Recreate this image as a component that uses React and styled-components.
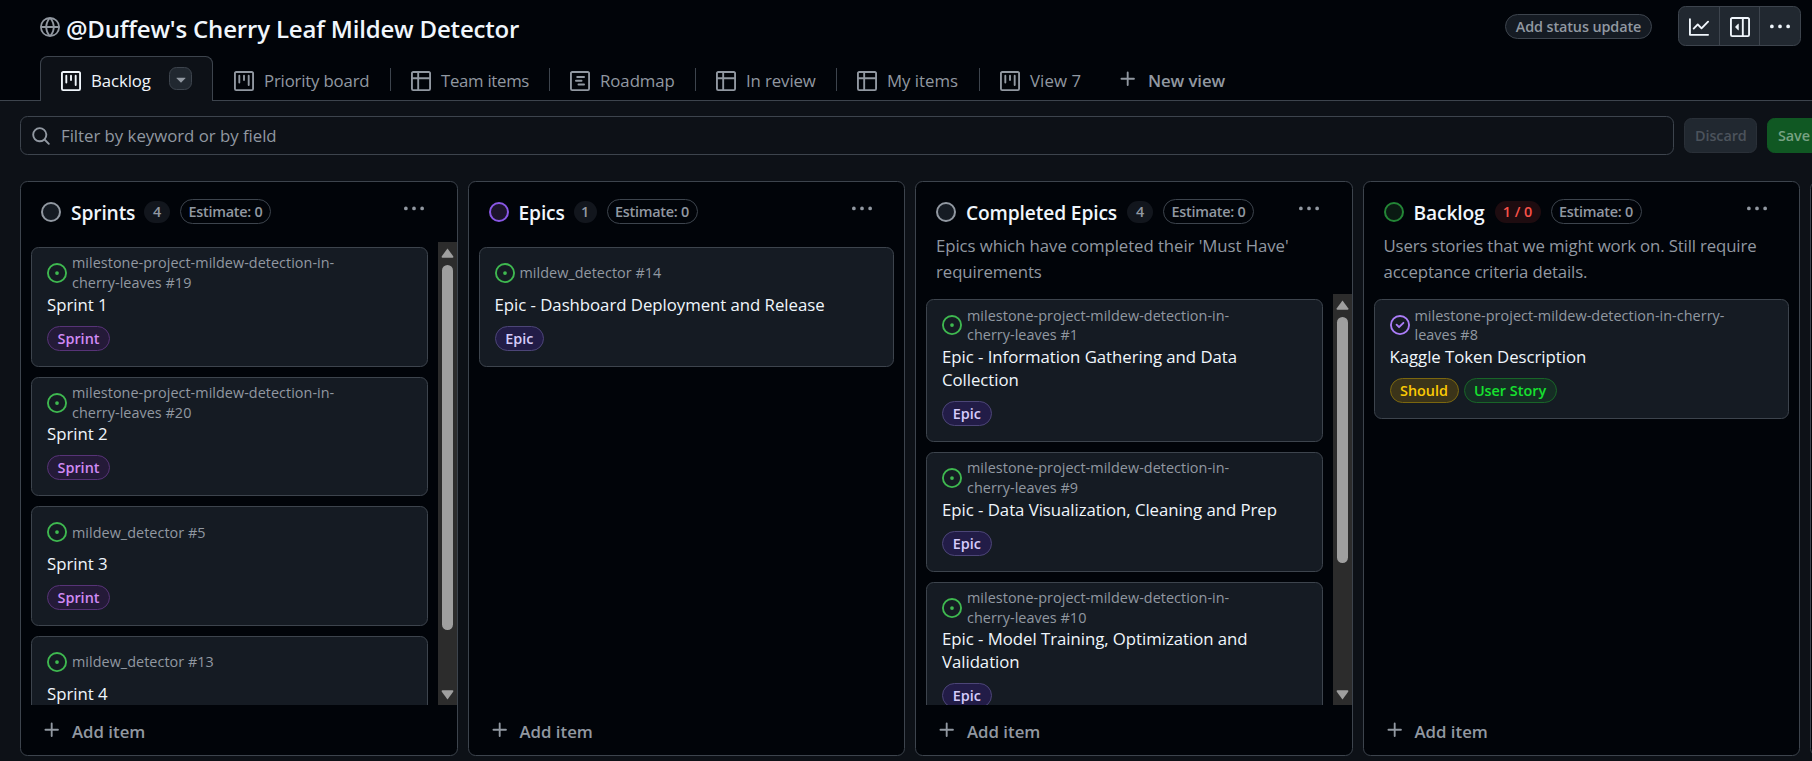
import React from "react";
import styled, { createGlobalStyle } from "styled-components";

const c = {
  canvas: "#0d1117",
  inset: "#010409",
  card: "#151b23",
  border: "#3d444d",
  text: "#f0f6fc",
  muted: "#9198a1",
  control: "#212830",
};

const GlobalStyle = createGlobalStyle`
  * { box-sizing: border-box; }
  html, body { margin: 0; padding: 0; }
  body {
    width: 1812px;
    height: 761px;
    overflow: hidden;
    background: ${c.canvas};
    color: ${c.text};
    font-family: "Open Sans", "Noto Sans", sans-serif;
    font-size: 16.8px;
  }
  button { font: inherit; letter-spacing: inherit; color: inherit; margin: 0; padding: 0; border: 0; background: none; }
  h1, h2, p { margin: 0; }
`;

const FRAME =
  "M1.75 0h12.5C15.216 0 16 .784 16 1.75v12.5A1.75 1.75 0 0 1 14.25 16H1.75A1.75 1.75 0 0 1 0 14.25V1.75C0 .784.784 0 1.75 0ZM1.5 1.75v12.5c0 .138.112.25.25.25h12.5a.25.25 0 0 0 .25-.25V1.75a.25.25 0 0 0-.25-.25H1.75a.25.25 0 0 0-.25.25Z";

const icons = {
  globe: [
    "M8 0a8 8 0 1 1 0 16A8 8 0 0 1 8 0ZM5.78 8.75a9.64 9.64 0 0 0 1.363 4.177c.255.426.542.832.857 1.215.245-.296.551-.705.857-1.215A9.64 9.64 0 0 0 10.22 8.75Zm4.44-1.5a9.64 9.64 0 0 0-1.363-4.177c-.307-.51-.612-.919-.857-1.215a9.927 9.927 0 0 0-.857 1.215A9.64 9.64 0 0 0 5.78 7.25Zm-5.944 1.5H1.543a6.507 6.507 0 0 0 4.666 5.5c-.123-.181-.24-.365-.352-.552-.715-1.192-1.437-2.874-1.581-4.948Zm-2.733-1.5h2.733c.144-2.074.866-3.756 1.58-4.948.12-.197.237-.381.353-.552a6.507 6.507 0 0 0-4.666 5.5Zm10.181 1.5c-.144 2.074-.866 3.756-1.58 4.948-.12.197-.237.381-.353.552a6.507 6.507 0 0 0 4.666-5.5Zm2.733-1.5a6.507 6.507 0 0 0-4.666-5.5c.123.181.24.365.353.552.714 1.192 1.436 2.874 1.58 4.948Z",
  ],
  board: [
    FRAME,
    "M11.75 3a.75.75 0 0 1 .75.75v7.5a.75.75 0 0 1-1.5 0v-7.5a.75.75 0 0 1 .75-.75Zm-8.25.75a.75.75 0 0 1 1.5 0v5.5a.75.75 0 0 1-1.5 0ZM8 3a.75.75 0 0 1 .75.75v3.5a.75.75 0 0 1-1.5 0v-3.5A.75.75 0 0 1 8 3Z",
  ],
  table: [
    "M0 1.75C0 .784.784 0 1.75 0h12.5C15.216 0 16 .784 16 1.75v12.5A1.75 1.75 0 0 1 14.25 16H1.75A1.75 1.75 0 0 1 0 14.25ZM6.5 6.5v8h7.75a.25.25 0 0 0 .25-.25V6.5Zm8-1.5V1.75a.25.25 0 0 0-.25-.25H6.5V5Zm-13 1.5v7.75c0 .138.112.25.25.25H5v-8ZM5 5V1.5H1.75a.25.25 0 0 0-.25.25V5Z",
  ],
  roadmap: [
    FRAME,
    "M4.75 7a.75.75 0 0 0 0 1.5h4.5a.75.75 0 0 0 0-1.5h-4.5ZM5 4.75A.75.75 0 0 1 5.75 4h5.5a.75.75 0 0 1 0 1.5h-5.5A.75.75 0 0 1 5 4.75ZM6.75 10a.75.75 0 0 0 0 1.5h4.5a.75.75 0 0 0 0-1.5h-4.5Z",
  ],
  search: [
    "M10.68 11.74a6 6 0 0 1-7.922-8.982 6 6 0 0 1 8.982 7.922l3.04 3.04a.749.749 0 0 1-.326 1.275.749.749 0 0 1-.734-.215ZM11.5 7a4.499 4.499 0 1 0-8.997 0A4.499 4.499 0 0 0 11.5 7Z",
  ],
  graph: [
    "M1.5 1.75V13.5h13.75a.75.75 0 0 1 0 1.5H.75a.75.75 0 0 1-.75-.75V1.75a.75.75 0 0 1 1.5 0Zm14.28 2.53-5.25 5.25a.75.75 0 0 1-1.06 0L7 7.06 4.28 9.78a.751.751 0 0 1-1.042-.018.751.751 0 0 1-.018-1.042l3.25-3.25a.75.75 0 0 1 1.06 0L10 7.94l4.72-4.72a.751.751 0 0 1 1.042.018.751.751 0 0 1 .018 1.042Z",
  ],
  sidebar: [
    "m4.177 7.823 2.396-2.396A.25.25 0 0 1 7 5.604v4.792a.25.25 0 0 1-.427.177L4.177 8.177a.25.25 0 0 1 0-.354Z",
    "M0 1.75C0 .784.784 0 1.75 0h12.5C15.216 0 16 .784 16 1.75v12.5A1.75 1.75 0 0 1 14.25 16H1.75A1.75 1.75 0 0 1 0 14.25Zm1.75-.25a.25.25 0 0 0-.25.25v12.5c0 .138.112.25.25.25H9.5v-13Zm12.5 13a.25.25 0 0 0 .25-.25V1.75a.25.25 0 0 0-.25-.25H11v13Z",
  ],
  kebab: [
    "M8 9a1.5 1.5 0 1 0 0-3 1.5 1.5 0 0 0 0 3ZM1.5 9a1.5 1.5 0 1 0 0-3 1.5 1.5 0 0 0 0 3Zm13 0a1.5 1.5 0 1 0 0-3 1.5 1.5 0 0 0 0 3Z",
  ],
  open: [
    "M8 9.5a1.5 1.5 0 1 0 0-3 1.5 1.5 0 0 0 0 3Z",
    "M8 0a8 8 0 1 1 0 16A8 8 0 0 1 8 0ZM1.5 8a6.5 6.5 0 1 0 13 0 6.5 6.5 0 0 0-13 0Z",
  ],
  closed: [
    "M11.28 6.78a.75.75 0 0 0-1.06-1.06L7.25 8.69 5.78 7.22a.75.75 0 0 0-1.06 1.06l2 2a.75.75 0 0 0 1.06 0l3.5-3.5Z",
    "M16 8A8 8 0 1 1 0 8a8 8 0 0 1 16 0Zm-1.5 0a6.5 6.5 0 1 0-13 0 6.5 6.5 0 0 0 13 0Z",
  ],
  plus: [
    "M7.75 2a.75.75 0 0 1 .75.75V7h4.25a.75.75 0 0 1 0 1.5H8.5v4.25a.75.75 0 0 1-1.5 0V8.5H2.75a.75.75 0 0 1 0-1.5H7V2.75A.75.75 0 0 1 7.75 2Z",
  ],
  caret: [
    "m4.427 7.427 3.396 3.396a.25.25 0 0 0 .354 0l3.396-3.396A.25.25 0 0 0 11.396 7H4.604a.25.25 0 0 0-.177.427Z",
  ],
};

const Svg = styled.svg`
  display: block;
  flex: none;
  fill: currentColor;
`;

function Icon({ name, size = 20, color }) {
  return (
    <Svg width={size} height={size} viewBox="0 0 16 16" color={color} aria-hidden="true">
      {icons[name].map((d) => (
        <path key={d} d={d} fillRule="evenodd" />
      ))}
    </Svg>
  );
}

/* ---------- header ---------- */

const Page = styled.div`
  width: 1812px;
  height: 761px;
  overflow: hidden;
  display: flex;
  flex-direction: column;
`;

const Header = styled.header`
  height: 56px;
  flex: none;
  display: flex;
  align-items: flex-start;
  padding: 6px 11px 0 40px;
  background: ${c.inset};
`;

const TitleGroup = styled.div`
  display: flex;
  align-items: flex-start;
  gap: 6px;
  flex: 1;
  padding-top: 11px;
  color: ${c.muted};
`;

const Title = styled.h1`
  margin-top: -5px;
  font-size: 24px;
  line-height: 34px;
  font-weight: 600;
  letter-spacing: -0.18px;
  color: ${c.text};
  white-space: nowrap;
`;

const StatusButton = styled.button`
  margin: 8px 26px 0 0;
  width: 147px;
  height: 25px;
  border: 1px solid ${c.border};
  border-radius: 13px;
  background: ${c.card};
  color: ${c.muted};
  font-size: 14.4px;
  line-height: 23px;
  font-weight: 600;
  letter-spacing: -0.1px;
  white-space: nowrap;
`;

const ButtonGroup = styled.div`
  display: flex;
  width: 123px;
  height: 40px;
  border: 1px solid ${c.border};
  border-radius: 7.5px;
  background: ${c.control};
`;

const GroupButton = styled.button`
  flex: 1;
  display: flex;
  align-items: center;
  justify-content: center;
  padding-top: 2px;
  & + & { border-left: 1px solid ${c.border}; }
`;

/* ---------- tabs ---------- */

const TabBar = styled.nav`
  height: 45px;
  flex: none;
  display: flex;
  align-items: stretch;
  padding-left: 40px;
  background: ${c.inset};
  box-shadow: inset 0 -1px 0 ${c.border};
`;

const ActiveTab = styled.div`
  width: 173px;
  display: flex;
  align-items: center;
  gap: 10px;
  padding: 4px 20px 0 20px;
  border: 1px solid ${c.border};
  border-bottom: 0;
  border-radius: 7.5px 7.5px 0 0;
  background: ${c.canvas};
  line-height: 24px;
  letter-spacing: -0.08px;
`;

const CaretButton = styled.button`
  width: 23px;
  height: 23px;
  margin: 0 0 5px auto;
  display: flex;
  align-items: center;
  justify-content: center;
  border: 1px solid ${c.border};
  border-radius: 7.5px;
  background: ${c.control};
  color: ${c.muted};
`;

const Tab = styled.div`
  width: ${(p) => p.$width}px;
  display: flex;
  align-items: center;
  gap: 10px;
  padding: 5px 0 0 ${(p) => (p.$first ? 21 : 20)}px;
  color: ${c.muted};
  white-space: nowrap;
  line-height: 24px;
  letter-spacing: ${(p) => p.$tracking}px;
`;

const TabDivider = styled.div`
  width: 1px;
  height: 23px;
  margin-top: 12px;
  background: ${c.border};
`;

const NewView = styled.button`
  display: flex;
  align-items: center;
  gap: 10px;
  padding: 1px 0 0 36px;
  color: ${c.muted};
  font-weight: 600;
  line-height: 24px;
  letter-spacing: -0.1px;
  span { padding-top: 4px; }
`;

/* ---------- filter ---------- */

const FilterBar = styled.div`
  height: 80px;
  flex: none;
  display: flex;
  align-items: center;
  gap: 10px;
  padding: 0 0 11px 20px;
`;

const FilterField = styled.div`
  width: 1654px;
  height: 39px;
  flex: none;
  display: flex;
  align-items: center;
  gap: 10px;
  padding-left: 10px;
  border: 1px solid ${c.border};
  border-radius: 7.5px;
  color: ${c.muted};
  line-height: 24px;
  letter-spacing: -0.02px;
  span { padding-top: 1px; }
`;

const ActionButton = styled.button`
  width: ${(p) => p.$width}px;
  height: 35px;
  flex: none;
  padding: 0 0 1px 10px;
  text-align: left;
  border: 1px solid ${(p) => (p.$primary ? "#105823" : "#2a3038")};
  border-radius: 7.5px;
  background: ${(p) => (p.$primary ? "#105823" : c.control)};
  color: ${(p) => (p.$primary ? "#78a283" : "#4c535c")};
  font-size: 14.4px;
  font-weight: 600;
  letter-spacing: -0.08px;
  white-space: nowrap;
`;

/* ---------- board ---------- */

const Board = styled.main`
  flex: none;
  height: 575px;
  display: flex;
  gap: 10px;
  padding-left: 20px;
`;

const ColumnBox = styled.section`
  width: 437.5px;
  flex: none;
  display: flex;
  flex-direction: column;
  border: 1px solid ${c.border};
  border-radius: 7.5px;
  background: ${c.inset};
`;

const ColumnHead = styled.div`
  height: 59px;
  flex: none;
  display: flex;
  align-items: center;
  gap: 10px;
  padding: 0 32.4px 0 20px;
`;

const StatusDot = styled.span`
  width: 20px;
  height: 20px;
  margin-top: 1px;
  flex: none;
  border: 2px solid ${(p) => p.$ring};
  border-radius: 50%;
  background: ${(p) => p.$fill};
`;

const ColumnTitle = styled.h2`
  width: ${(p) => p.$width}px;
  padding-top: 2px;
  font-size: 19.2px;
  line-height: 28px;
  font-weight: 600;
  letter-spacing: -0.13px;
  white-space: nowrap;
`;

const Count = styled.span`
  height: 22px;
  width: ${(p) => p.$width}px;
  border-radius: 11px;
  text-align: center;
  font-size: 14.4px;
  line-height: 21px;
  font-weight: 600;
  background: ${(p) => (p.$over ? "#1e0c10" : "#12161d")};
  color: ${(p) => (p.$over ? "#f85149" : c.muted)};
`;

const Estimate = styled.span`
  width: 91px;
  height: 25px;
  border: 1px solid ${c.border};
  border-radius: 13px;
  text-align: center;
  font-size: 14.4px;
  line-height: 23px;
  font-weight: 600;
  letter-spacing: -0.25px;
  color: ${c.muted};
  white-space: nowrap;
`;

const MenuButton = styled.button`
  margin: -6px 0 0 auto;
  color: ${c.muted};
`;

const Description = styled.p`
  height: 60.3px;
  margin-top: -8px;
  padding: 0 20px;
  font-size: 16.8px;
  line-height: 26.25px;
  letter-spacing: ${(p) => p.$tracking}px;
  color: ${c.muted};
  white-space: pre-line;
`;

const ColumnBody = styled.div`
  flex: 1;
  min-height: 0;
  margin-top: 1px;
  display: flex;
  overflow: hidden;
`;

const CardList = styled.div`
  flex: 1;
  min-width: 0;
  padding: 5px 10px 0;
  overflow: hidden;
`;

const CardBox = styled.article`
  margin-bottom: 10px;
  padding: 5px 15px 15px;
  border: 1px solid ${c.border};
  border-radius: 7.5px;
  background: ${c.card};
`;

const Meta = styled.div`
  height: 40px;
  display: flex;
  align-items: center;
  gap: 5px;
  color: ${c.muted};
  font-size: 14.4px;
  line-height: 19.7px;
  letter-spacing: 0.04px;
  white-space: pre-line;
`;

const CardTitle = styled.div`
  margin-top: -0.3px;
  font-size: 16.8px;
  line-height: 23px;
  letter-spacing: -0.04px;
  white-space: pre-line;
`;

const Labels = styled.div`
  display: flex;
  gap: 5px;
  margin-top: 10px;
`;

const tones = {
  sprint: ["#d08bf5", "#241a38", "#573377"],
  epic: ["#d6ccfb", "#221c47", "#4c4577"],
  should: ["#fbca04", "#3b3419", "#7b670f"],
  story: ["#16e22f", "#152d24", "#196528"],
};

const Label = styled.span`
  width: ${(p) => p.$width}px;
  height: 25px;
  border: 1px solid ${(p) => tones[p.$tone][2]};
  border-radius: 13px;
  background: ${(p) => tones[p.$tone][1]};
  color: ${(p) => tones[p.$tone][0]};
  font-size: 14.4px;
  line-height: 24px;
  font-weight: 600;
  text-align: center;
  white-space: nowrap;
`;

const ScrollTrack = styled.div`
  width: 19px;
  flex: none;
  display: flex;
  flex-direction: column;
  align-items: center;
  background: #2c2c2c;
  color: #9f9f9f;
  padding: 6px 0 5px;
`;

const ScrollThumb = styled.div`
  width: 11px;
  height: ${(p) => p.$height}px;
  margin: 7px 0 auto;
  border-radius: 6px;
  background: #9f9f9f;
`;

const Arrow = styled.svg`
  display: block;
  flex: none;
  fill: currentColor;
`;

const AddItem = styled.button`
  height: 50px;
  flex: none;
  display: flex;
  align-items: flex-start;
  gap: 10px;
  padding: 15px 0 0 21px;
  color: ${c.muted};
  font-size: 16.8px;
  line-height: 24px;
  font-weight: 600;
`;

const LABELS = {
  sprint: ["Sprint", 63],
  epic: ["Epic", 49.5],
  should: ["Should", 69],
  story: ["User Story", 93],
};

const LONG = "milestone-project-mildew-detection-in-\ncherry-leaves ";

const columns = [
  {
    title: "Sprints", titleWidth: 63, ring: "#9198a1", fill: "#151b23",
    count: "4", countWidth: 26, thumb: 365,
    cards: [
      { repo: LONG + "#19", title: "Sprint 1", labels: ["sprint"] },
      { repo: LONG + "#20", title: "Sprint 2", labels: ["sprint"] },
      { repo: "mildew_detector #5", title: "Sprint 3", labels: ["sprint"] },
      { repo: "mildew_detector #13", title: "Sprint 4", labels: [] },
    ],
  },
  {
    title: "Epics", titleWidth: 45, ring: "#8957e5", fill: "#1c142b",
    count: "1", countWidth: 23,
    cards: [
      { repo: "mildew_detector #14", title: "Epic - Dashboard Deployment and Release", labels: ["epic"] },
    ],
  },
  {
    title: "Completed Epics", titleWidth: 151, ring: "#9198a1", fill: "#151b23",
    count: "4", countWidth: 26, thumb: 246,
    description: "Epics which have completed their 'Must Have'\nrequirements", tracking: -0.07,
    cards: [
      { repo: LONG + "#1", title: "Epic - Information Gathering and Data\nCollection", labels: ["epic"] },
      { repo: LONG + "#9", title: "Epic - Data Visualization, Cleaning and Prep", labels: ["epic"] },
      { repo: LONG + "#10", title: "Epic - Model Training, Optimization and\nValidation", labels: ["epic"] },
    ],
  },
  {
    title: "Backlog", titleWidth: 71, ring: "#238636", fill: "#0a1a12",
    count: "1 / 0", countWidth: 46, over: true,
    description: "Users stories that we might work on. Still require\nacceptance criteria details.", tracking: -0.14,
    cards: [
      {
        repo: "milestone-project-mildew-detection-in-cherry-\nleaves #8",
        title: "Kaggle Token Description", labels: ["should", "story"], closed: true,
      },
    ],
  },
];

const tabs = [
  ["board", "Priority board", 177, -0.18],
  ["table", "Team items", 158, -0.3],
  ["roadmap", "Roadmap", 145, -0.05],
  ["table", "In review", 140, -0.1],
  ["table", "My items", 142, 0],
  ["board", "View 7", 102, 0.1],
];

function Card({ repo, title, labels, closed }) {
  return (
    <CardBox>
      <Meta>
        <Icon name={closed ? "closed" : "open"} color={closed ? "#ab7df8" : "#3fb950"} />
        <span>{repo}</span>
      </Meta>
      <CardTitle>{title}</CardTitle>
      <Labels>
        {labels.map((l) => (
          <Label key={l} $tone={l} $width={LABELS[l][1]}>{LABELS[l][0]}</Label>
        ))}
      </Labels>
    </CardBox>
  );
}

function Scrollbar({ thumb }) {
  return (
    <ScrollTrack>
      <Arrow width="13" height="10" viewBox="0 0 13 10"><path d="M6.5 0.5 12.2 8.2Q12.8 9.8 11.6 9.8H1.4Q.2 9.8.8 8.2Z" /></Arrow>
      <ScrollThumb $height={thumb} />
      <Arrow width="13" height="10" viewBox="0 0 13 10"><path d="M6.5 9.5 12.2 1.8Q12.8.2 11.6.2H1.4Q.2.2.8 1.8Z" /></Arrow>
    </ScrollTrack>
  );
}

function Column({ col }) {
  return (
    <ColumnBox>
      <ColumnHead>
        <StatusDot $ring={col.ring} $fill={col.fill} />
        <ColumnTitle $width={col.titleWidth}>{col.title}</ColumnTitle>
        <Count $width={col.countWidth} $over={col.over}>{col.count}</Count>
        <Estimate>Estimate: 0</Estimate>
        <MenuButton aria-label="Column menu"><Icon name="kebab" /></MenuButton>
      </ColumnHead>
      {col.description && <Description $tracking={col.tracking}>{col.description}</Description>}
      <ColumnBody>
        <CardList>
          {col.cards.map((card) => <Card key={card.title} {...card} />)}
        </CardList>
        {col.thumb && <Scrollbar thumb={col.thumb} />}
      </ColumnBody>
      <AddItem><Icon name="plus" /><span>Add item</span></AddItem>
    </ColumnBox>
  );
}

export default function App() {
  return (
    <Page>
      <GlobalStyle />
      <Header>
        <TitleGroup>
          <Icon name="globe" />
          <Title>@Duffew's Cherry Leaf Mildew Detector</Title>
        </TitleGroup>
        <StatusButton>Add status update</StatusButton>
        <ButtonGroup>
          <GroupButton aria-label="Insights"><Icon name="graph" /></GroupButton>
          <GroupButton aria-label="Details"><Icon name="sidebar" /></GroupButton>
          <GroupButton aria-label="More"><Icon name="kebab" /></GroupButton>
        </ButtonGroup>
      </Header>
      <TabBar>
        <ActiveTab>
          <Icon name="board" />
          <span>Backlog</span>
          <CaretButton aria-label="View options"><Icon name="caret" /></CaretButton>
        </ActiveTab>
        {tabs.map(([icon, label, width, tracking], i) => (
          <React.Fragment key={label}>
            {i > 0 && <TabDivider />}
            <Tab $width={width} $tracking={tracking} $first={i === 0}><Icon name={icon} /><span>{label}</span></Tab>
          </React.Fragment>
        ))}
        <NewView><Icon name="plus" /><span>New view</span></NewView>
      </TabBar>
      <FilterBar>
        <FilterField><Icon name="search" /><span>Filter by keyword or by field</span></FilterField>
        <ActionButton $width={73}>Discard</ActionButton>
        <ActionButton $width={62} $primary>Save</ActionButton>
      </FilterBar>
      <Board>
        {columns.map((col) => <Column key={col.title} col={col} />)}
        <ColumnBox />
      </Board>
    </Page>
  );
}
